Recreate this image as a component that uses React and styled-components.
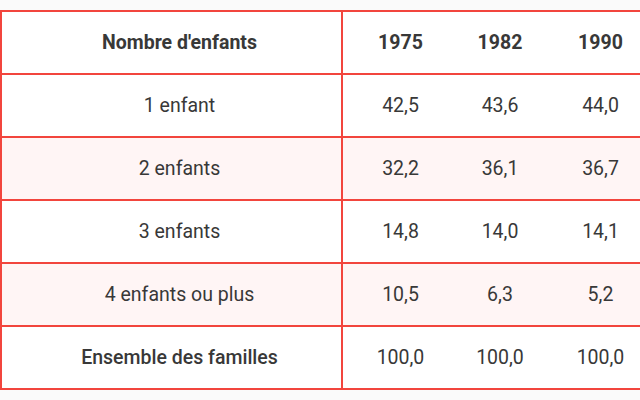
import React from 'react';
import styled, { createGlobalStyle } from 'styled-components';

const GlobalStyle = createGlobalStyle`
  html, body {
    margin: 0;
    padding: 0;
    background: #fafafa;
    font-family: Roboto, "Liberation Sans", sans-serif;
  }
`

const Page = styled.div`
  padding-top: 10px;
  width: 640px;
  height: 400px;
  overflow: hidden;
`

const Table = styled.table`
  border-collapse: collapse;
  width: 642px;
  table-layout: fixed;
  background: #fff;
  color: #383838;
  font-size: 19.5px;
`

const Row = styled.tr`
  background: ${(props) => (props.$striped ? '#fff5f5' : '#fff')};
  border-top: 2px solid #f2453d;
  border-bottom: 2px solid #f2453d;
`

const Cell = styled.td`
  height: 63px;
  padding: 0 0 0 16px;
  text-align: center;
  font-weight: ${(props) => props.$weight || 400};
  box-sizing: border-box;
  border-left: ${(props) => (props.$label ? '2px solid #f2453d' : 'none')};
  border-right: ${(props) => (props.$label ? '2px solid #f2453d' : 'none')};
`

const HeadCell = styled(Cell).attrs({ as: 'th' })`
  font-weight: 700;
`

const rows = [
  ['1 enfant', '42,5', '43,6', '44,0'],
  ['2 enfants', '32,2', '36,1', '36,7'],
  ['3 enfants', '14,8', '14,0', '14,1'],
  ['4 enfants ou plus', '10,5', '6,3', '5,2'],
]

const App = () => {
  return (
    <Page>
      <GlobalStyle />
      <Table>
        <colgroup>
          <col style={{ width: 341 }} />
          <col style={{ width: 100 }} />
          <col style={{ width: 100 }} />
          <col style={{ width: 101 }} />
        </colgroup>
        <thead>
          <Row>
            <HeadCell $label>Nombre d'enfants</HeadCell>
            <HeadCell>1975</HeadCell>
            <HeadCell>1982</HeadCell>
            <HeadCell>1990</HeadCell>
          </Row>
        </thead>
        <tbody>
          {rows.map((row, index) => (
            <Row key={index} $striped={index % 2 === 1}>
              {row.map((value, i) => (
                <Cell key={i} $label={i === 0}>{value}</Cell>
              ))}
            </Row>
          ))}
          <Row>
            <Cell $label $weight={500}>Ensemble des familles</Cell>
            <Cell>100,0</Cell>
            <Cell>100,0</Cell>
            <Cell>100,0</Cell>
          </Row>
        </tbody>
      </Table>
    </Page>
  )
}

export default App;
